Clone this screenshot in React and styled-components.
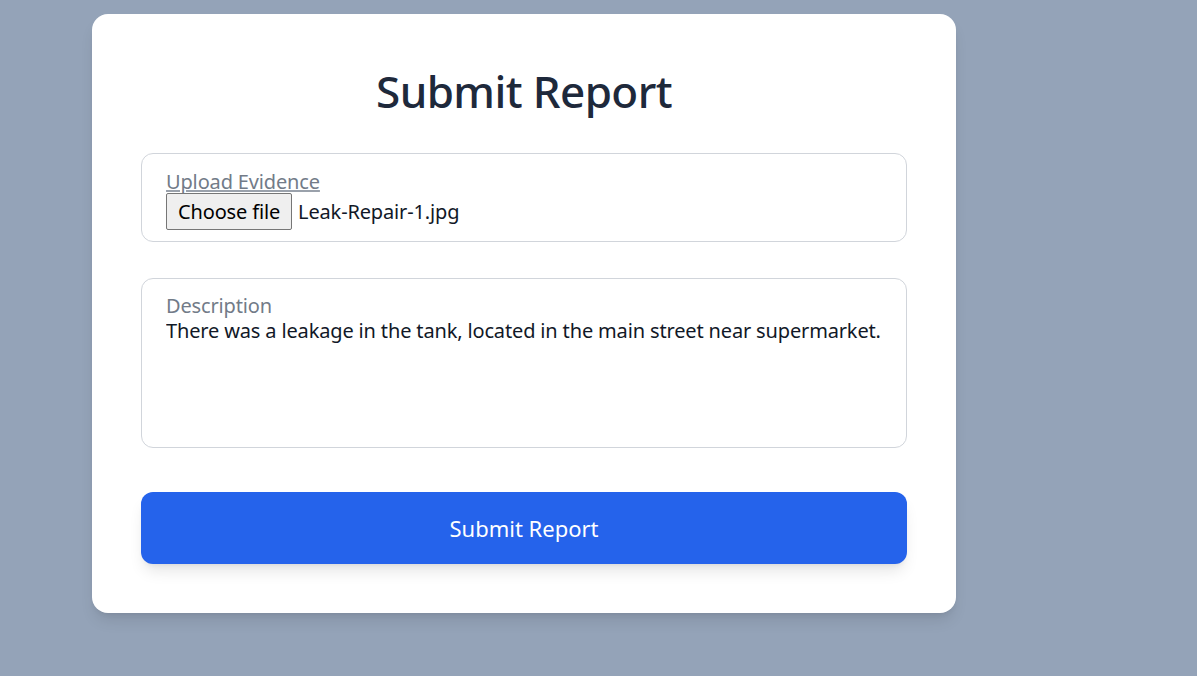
import React from "react";
import styled, { createGlobalStyle } from "styled-components";

const GlobalStyle = createGlobalStyle`
  html, body {
    margin: 0;
    padding: 0;
    background: #94a3b8;
    font-family: "Noto Sans", "Open Sans", sans-serif;
  }
`;

const Page = styled.div`
  min-height: 676px;
  padding: 14px 0 0 92px;
  box-sizing: border-box;
`;

const Card = styled.form`
  width: 864px;
  box-sizing: border-box;
  background: #ffffff;
  border-radius: 16px;
  padding: 46px 49px 49px;
  box-shadow: 0 10px 15px -3px rgba(0, 0, 0, 0.1),
    0 4px 6px -4px rgba(0, 0, 0, 0.1);
  display: flex;
  flex-direction: column;
`;

const Title = styled.h1`
  margin: 0 0 31px;
  text-align: center;
  font-size: 44px;
  line-height: 62px;
  font-weight: 500;
  letter-spacing: -0.6px;
  color: #1e293b;
`;

const Field = styled.div`
  border: 1px solid #d1d5db;
  border-radius: 12px;
  padding: ${(p) => (p.$tall ? "15px 24px 16px" : "16px 24px 11px")};
  margin-bottom: ${(p) => p.$gap}px;
  display: flex;
  flex-direction: column;
  letter-spacing: -0.15px;
`;

const Label = styled.label`
  font-size: 20px;
  line-height: 24px;
  color: #727b88;
  ${(p) => p.$underline && "text-decoration: underline; text-decoration-color: #9aa1ab;"}
`;

const FileRow = styled.div`
  display: flex;
  align-items: center;
  gap: 6px;
  margin-top: -1px;
  font-size: 20px;
  color: #111827;
`;

const FileButton = styled.span`
  display: inline-flex;
  align-items: center;
  height: 37px;
  box-sizing: border-box;
  padding: 0 11px;
  background: #efefef;
  border: 1px solid #767676;
  border-radius: 2px;
  font-size: 20px;
  color: #000;
`;

const TextArea = styled.textarea`
  border: none;
  outline: none;
  resize: none;
  padding: 0;
  height: 113px;
  font-family: inherit;
  font-size: 20px;
  line-height: 26px;
  letter-spacing: -0.15px;
  color: #111827;
  background: transparent;
`;

const SubmitButton = styled.button`
  height: 72px;
  border: none;
  border-radius: 12px;
  background: #2563eb;
  color: #ffffff;
  font-family: inherit;
  font-size: 22px;
  cursor: pointer;
  box-shadow: 0 10px 15px -3px rgba(0, 0, 0, 0.1),
    0 4px 6px -4px rgba(0, 0, 0, 0.1);
`;

export default function App() {
  return (
    <>
      <GlobalStyle />
      <Page>
        <Card onSubmit={(e) => e.preventDefault()}>
          <Title>Submit Report</Title>
          <Field $gap={36}>
            <Label $underline>Upload Evidence</Label>
            <FileRow>
              <FileButton>Choose file</FileButton>
              <span>Leak-Repair-1.jpg</span>
            </FileRow>
          </Field>
          <Field $tall $gap={44}>
            <Label>Description</Label>
            <TextArea
              defaultValue="There was a leakage in the tank, located in the main street near supermarket."
            />
          </Field>
          <SubmitButton type="submit">Submit Report</SubmitButton>
        </Card>
      </Page>
    </>
  );
}
